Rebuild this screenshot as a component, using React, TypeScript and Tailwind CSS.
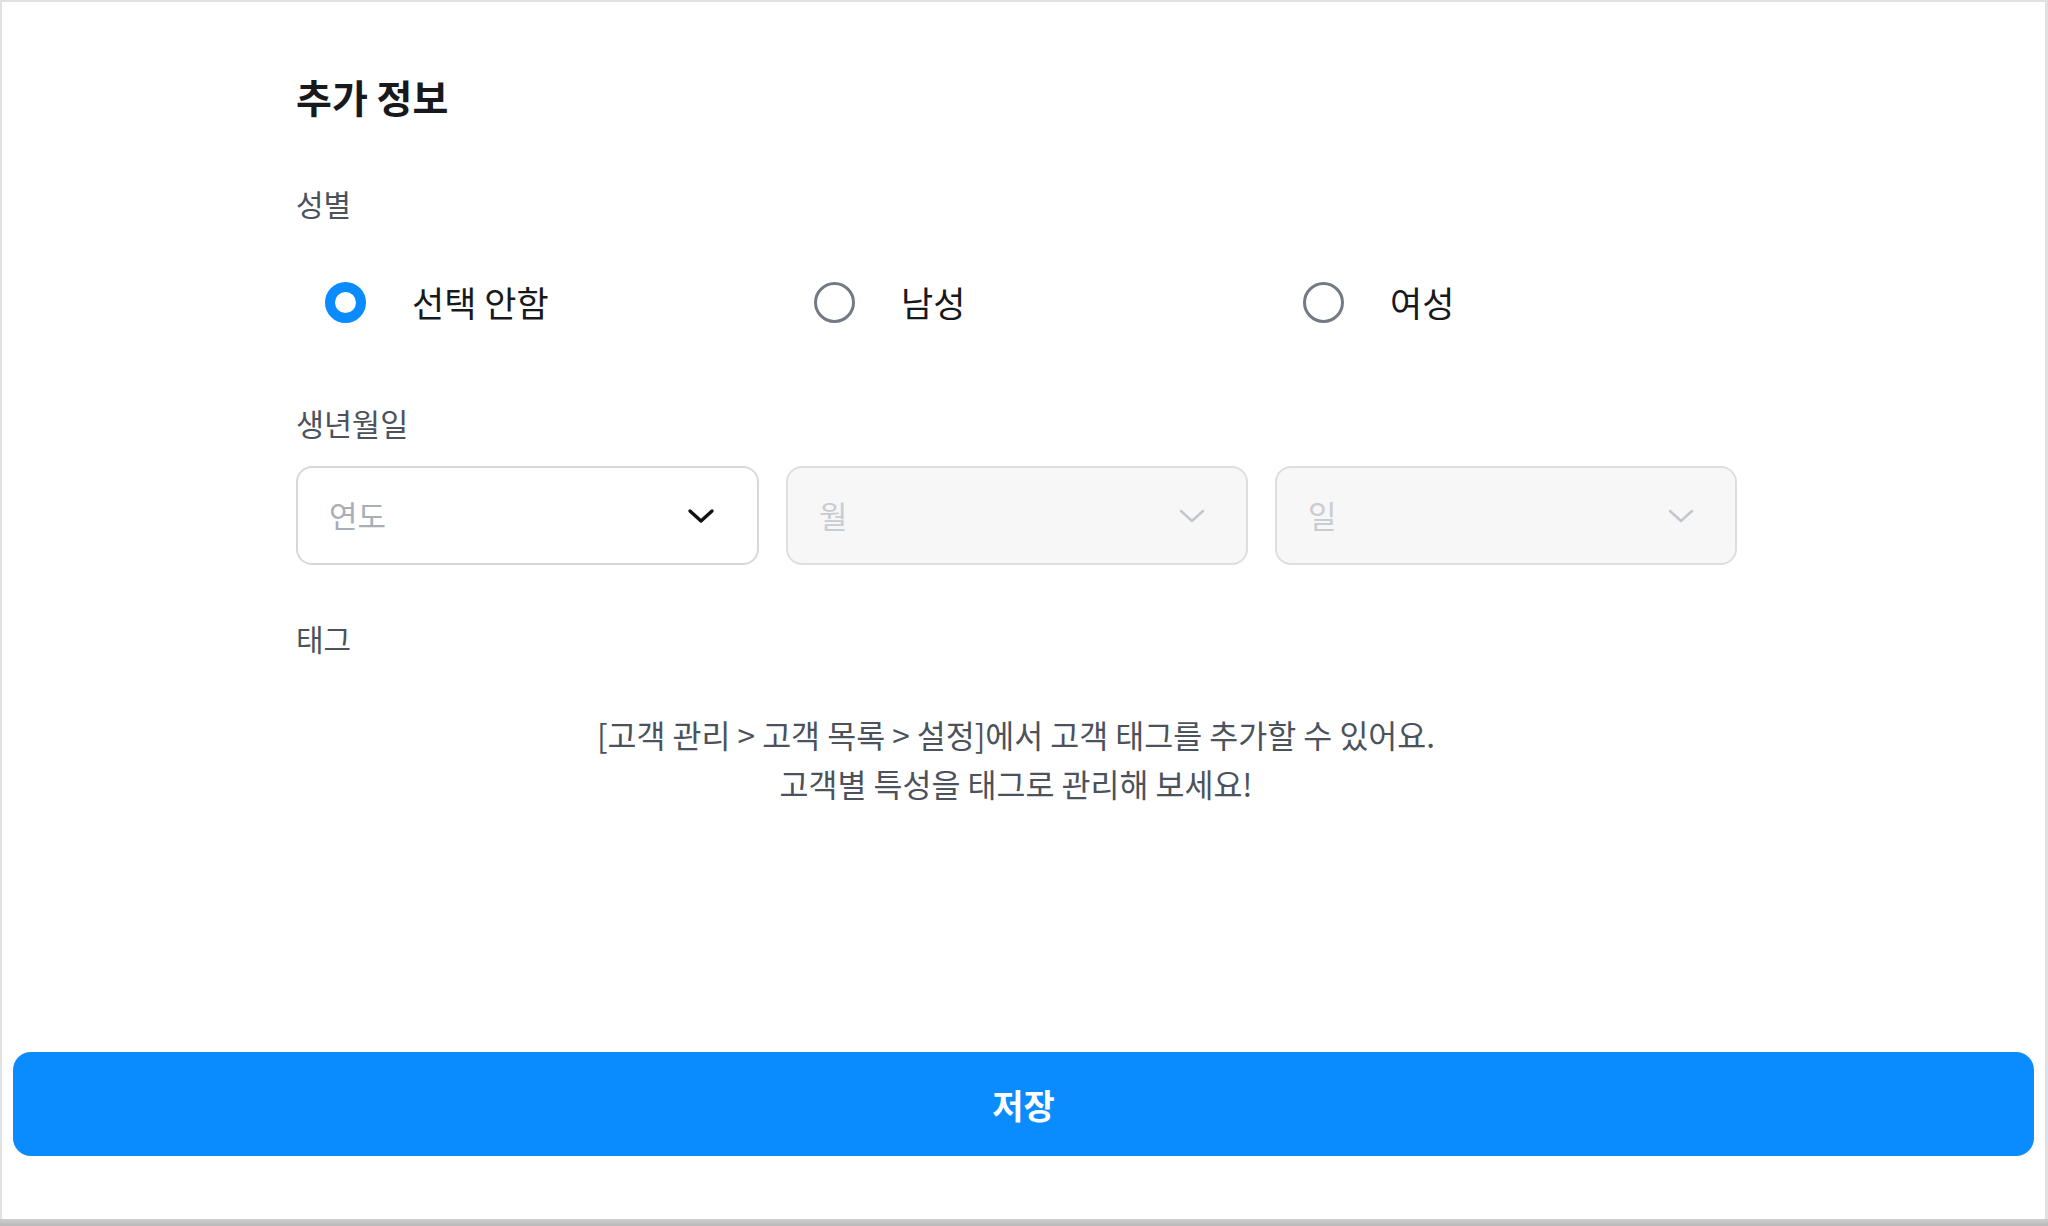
import React, { useState } from "react";

const FONT = { fontFamily: '"Noto Sans CJK KR", "Noto Sans", sans-serif' };

function Chevron({ disabled }: { disabled?: boolean }) {
  return (
    <svg width="28" height="16" viewBox="0 0 28 16" fill="none" className="shrink-0">
      <path
        d="M3 3 L14 13 L25 3"
        stroke={disabled ? "#c3c6cc" : "#111111"}
        strokeWidth={disabled ? 2.4 : 3.4}
        strokeLinecap="round"
        strokeLinejoin="round"
      />
    </svg>
  );
}

function Radio({ label, checked, onClick }: { label: string; checked: boolean; onClick: () => void }) {
  return (
    <button type="button" onClick={onClick} className="flex items-center w-[489px] shrink-0 text-left">
      {checked ? (
        <span className="w-[41px] h-[41px] rounded-full border-[10px] border-[#0a8bff] bg-white shrink-0" />
      ) : (
        <span className="w-[41px] h-[41px] rounded-full border-[3px] border-[#737a84] bg-white shrink-0" />
      )}
      <span className="ml-[46px] text-[35px] leading-[44px] text-[#17191c]">{label}</span>
    </button>
  );
}

function Select({ placeholder, disabled }: { placeholder: string; disabled?: boolean }) {
  return (
    <div
      className={
        disabled
          ? "w-[462px] h-[99px] shrink-0 rounded-[16px] border-2 border-[#dcdee2] bg-[#f7f7f8] flex items-center justify-between pl-[31px] pr-[40px]"
          : "w-[463px] h-[99px] shrink-0 rounded-[16px] border-2 border-[#d6d8dc] bg-white flex items-center justify-between pl-[31px] pr-[42px]"
      }
    >
      <span className={disabled ? "text-[31px] text-[#c9ccd1]" : "text-[31px] text-[#a9aeb6]"}>{placeholder}</span>
      <Chevron disabled={disabled} />
    </div>
  );
}

export default function App() {
  const [gender, setGender] = useState("none");
  const options = [
    { id: "none", label: "선택 안함" },
    { id: "male", label: "남성" },
    { id: "female", label: "여성" },
  ];

  return (
    <div style={FONT} className="w-[2048px] h-[1226px] bg-white flex flex-col overflow-hidden">
      <div className="flex-1 flex flex-col border-t-2 border-l-2 border-r-[3px] border-[#e1e1e1]">
        <div className="flex-1 pl-[294px] pr-[309px]">
          <h1 className="mt-[72px] text-[39px] leading-[44px] font-bold text-[#17191c]">추가 정보</h1>

          <div className="mt-[67px] text-[30px] leading-[36px] text-[#4b525c]">성별</div>
          <div className="mt-[59px] pl-[29px] flex">
            {options.map((o) => (
              <Radio key={o.id} label={o.label} checked={gender === o.id} onClick={() => setGender(o.id)} />
            ))}
          </div>

          <div className="mt-[81px] text-[30.5px] leading-[36px] text-[#4b525c]">생년월일</div>
          <div className="mt-[25px] flex gap-[27px]">
            <Select placeholder="연도" />
            <Select placeholder="월" disabled />
            <Select placeholder="일" disabled />
          </div>

          <div className="mt-[55px] text-[30px] leading-[36px] text-[#4b525c]">태그</div>
          <p className="mt-[54px] text-center text-[31.5px] leading-[49px] text-[#4b525c]">
            [고객 관리 &gt; 고객 목록 &gt; 설정]에서 고객 태그를 추가할 수 있어요.
            <br />
            고객별 특성을 태그로 관리해 보세요!
          </p>
        </div>

        <div className="pl-[11px] pr-[11px] pb-[63px]">
          <button
            type="button"
            className="w-full h-[104px] rounded-[18px] bg-[#0a8cff] text-white text-[34px] font-bold flex items-center justify-center"
          >
            저장
          </button>
        </div>
      </div>
      <div className="h-[7px] bg-gradient-to-b from-[#d0d0d0] to-[#b8b8b8]" />
    </div>
  );
}
